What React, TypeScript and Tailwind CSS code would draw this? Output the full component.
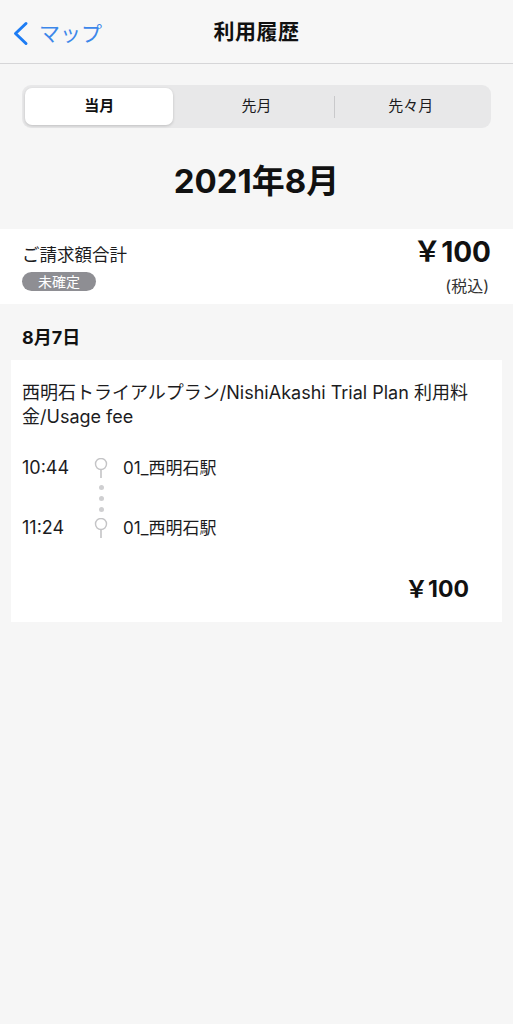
const font = { fontFamily: '"Inter", "Noto Sans CJK JP", sans-serif' };

function PinIcon() {
  return (
    <svg width="14" height="20" viewBox="0 0 14 20" fill="none">
      <circle cx="7" cy="6" r="5.5" stroke="#c4c4c6" strokeWidth="1.4" />
      <line x1="7" y1="11.5" x2="7" y2="20" stroke="#c4c4c6" strokeWidth="1.6" />
    </svg>
  );
}

function StopRow({ time, station }: { time: string; station: string }) {
  return (
    <div className="flex h-[20px] items-center">
      <span className="w-[72px] text-[18px] leading-none text-[#1c1c1e]">{time}</span>
      <div className="flex w-[14px] justify-center">
        <PinIcon />
      </div>
      <span className="ml-[15px] text-[17px] leading-none text-[#1c1c1e]">{station}</span>
    </div>
  );
}

const tabs = ["当月", "先月", "先々月"];

export default function App() {
  return (
    <div className="min-h-[1024px] w-full bg-[#f6f6f6]" style={font}>
      <header className="relative flex h-[64px] items-center justify-center border-b border-[#d6d6d8] bg-[#f7f7f7]">
        <div className="absolute left-[12px] top-[21px] flex items-center">
          <svg width="17" height="25" viewBox="0 0 17 25" fill="none">
            <path d="M14 2.5 L3.5 12.5 L14 22.5" stroke="#1d7cf4" strokeWidth="3" strokeLinecap="round" strokeLinejoin="round" />
          </svg>
          <span className="ml-[10px] text-[21px] leading-none text-[#3c87ea]">マップ</span>
        </div>
        <h1 className="text-[21px] font-bold tracking-[0.5px] text-[#111]">利用履歴</h1>
      </header>

      <div className="mx-[22px] mt-[21px] flex h-[43px] rounded-[9px] bg-[#e8e8e9] p-[3px]">
        {tabs.map((t, i) => (
          <div key={t} className="relative flex flex-1 items-center justify-center">
            {i === 0 ? (
              <div className="mr-[6px] flex h-full w-full items-center justify-center rounded-[7px] bg-white shadow-[0_1px_3px_rgba(0,0,0,0.18)]">
                <span className="text-[15px] font-bold text-[#111]">{t}</span>
              </div>
            ) : (
              <span className="text-[15px] text-[#1c1c1e]">{t}</span>
            )}
            {i === 2 && <div className="absolute left-0 top-[8px] h-[22px] w-px bg-[#c9c9cb]" />}
          </div>
        ))}
      </div>

      <div className="mt-[33px] text-center text-[33px] font-bold leading-[40px] text-[#111]">2021年8月</div>

      <section className="mt-[28px] flex h-[75px] justify-between bg-white pl-[22px] pr-[24px]">
        <div className="pt-[14px]">
          <div className="text-[17.5px] leading-[24px] text-[#1c1c1e]">ご請求額合計</div>
          <div className="mt-[5px] flex h-[19px] w-[74px] items-center justify-center rounded-full bg-[#8e8e93] text-[14px] leading-none text-white">
            未確定
          </div>
        </div>
        <div className="flex flex-col items-end pt-[8px]">
          <div className="-mr-[2px] text-[28px] font-bold leading-[30px] text-[#111]">￥100</div>
          <div className="mt-[9px] text-[16px] leading-[20px] text-[#333]">(税込)</div>
        </div>
      </section>

      <div className="mt-[22px] px-[22px] text-[18px] font-bold leading-[24px] text-[#111]">8月7日</div>

      <div className="mx-[11px] mt-[10px] bg-white pb-[19px] pl-[11px] pr-[33px] pt-[21px]">
        <p className="text-[18px] leading-[24px] text-[#1c1c1e]">
          西明石トライアルプラン/NishiAkashi Trial Plan 利用料
          <br />
          金/Usage fee
        </p>
        <div className="mt-[29px]">
          <StopRow time="10:44" station="01_西明石駅" />
          <div className="flex h-[40px] flex-col items-start justify-center gap-[6px] pl-[77px]">
            <span className="h-[5px] w-[5px] rounded-full bg-[#cfcfd1]" />
            <span className="h-[5px] w-[5px] rounded-full bg-[#cfcfd1]" />
            <span className="h-[5px] w-[5px] rounded-full bg-[#cfcfd1]" />
          </div>
          <StopRow time="11:24" station="01_西明石駅" />
        </div>
        <div className="mt-[37px] text-right text-[23px] font-bold leading-[28px] text-[#111]">￥100</div>
      </div>
    </div>
  );
}
